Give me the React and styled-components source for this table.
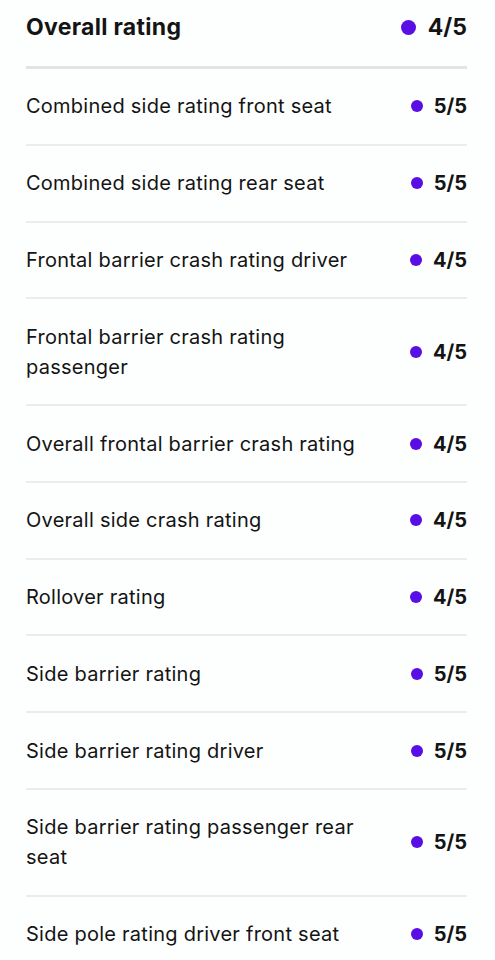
import React from "react";
import styled, { createGlobalStyle } from "styled-components";

const GlobalStyle = createGlobalStyle`
  html, body { margin: 0; padding: 0; background: #fdfefe; }
  body { font-family: "Inter", "Noto Sans", sans-serif; color: #141414; -webkit-font-smoothing: antialiased; }
`;

const Wrapper = styled.div`
  padding: 0 28px 0 26px;
`;

const Header = styled.div`
  display: flex;
  align-items: center;
  justify-content: space-between;
  padding: 10px 0 22px;
  border-bottom: 3px solid #e2e3e3;
`;

const HeaderTitle = styled.h2`
  margin: 0;
  font-size: 23px;
  line-height: 34px;
  font-weight: 700;
  letter-spacing: 0.3px;
`;

const List = styled.ul`
  list-style: none;
  margin: 0;
  padding: 0;
`;

const Row = styled.li`
  display: flex;
  align-items: center;
  justify-content: space-between;
  gap: 24px;
  padding: 22.4px 0;
  border-bottom: ${(p) => (p.$last ? "none" : "2px solid #ebecec")};
`;

const Label = styled.span`
  font-size: 20px;
  line-height: 30px;
  font-weight: 400;
  letter-spacing: 0.25px;
  max-width: 340px;
`;

const Rating = styled.span`
  display: flex;
  align-items: center;
  gap: ${(p) => (p.$large ? "12px" : "11px")};
  flex-shrink: 0;
  font-weight: 700;
  font-size: ${(p) => (p.$large ? "23px" : "20px")};
  line-height: 1;
`;

const Dot = styled.span`
  display: inline-block;
  width: ${(p) => (p.$large ? "15px" : "12px")};
  height: ${(p) => (p.$large ? "15px" : "12px")};
  border-radius: 50%;
  background: #5a0ee6;
`;

const items = [
  ["Combined side rating front seat", "5/5"],
  ["Combined side rating rear seat", "5/5"],
  ["Frontal barrier crash rating driver", "4/5"],
  ["Frontal barrier crash rating passenger", "4/5"],
  ["Overall frontal barrier crash rating", "4/5"],
  ["Overall side crash rating", "4/5"],
  ["Rollover rating", "4/5"],
  ["Side barrier rating", "5/5"],
  ["Side barrier rating driver", "5/5"],
  ["Side barrier rating passenger rear seat", "5/5"],
  ["Side pole rating driver front seat", "5/5"],
];

export default function App() {
  return (
    <>
      <GlobalStyle />
      <Wrapper>
        <Header>
          <HeaderTitle>Overall rating</HeaderTitle>
          <Rating $large>
            <Dot $large />
            4/5
          </Rating>
        </Header>
        <List>
          {items.map(([label, value], i) => (
            <Row key={label} $last={i === items.length - 1}>
              <Label>{label}</Label>
              <Rating>
                <Dot />
                {value}
              </Rating>
            </Row>
          ))}
        </List>
      </Wrapper>
    </>
  );
}
